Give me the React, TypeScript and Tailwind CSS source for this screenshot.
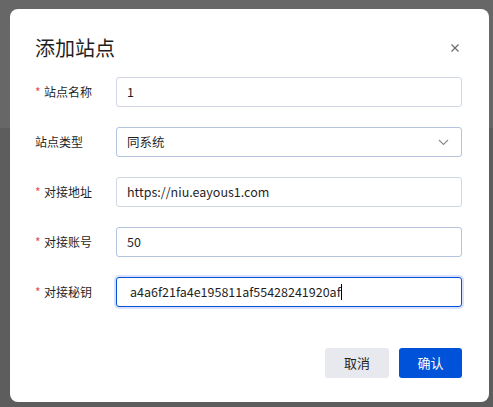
import React from "react";

const font = { fontFamily: '"Microsoft YaHei", "Noto Sans CJK SC", "Noto Sans", sans-serif' };

function Label({ text, required }: { text: string; required?: boolean }) {
  return (
    <div className="w-[81px] shrink-0 flex items-center text-[12px] text-[#1f1f1f]">
      {required && <span className="text-[#e34d59] mr-[3px] w-[6px]">*</span>}
      <span>{text}</span>
    </div>
  );
}

function Row({ label, required, children }: { label: string; required?: boolean; children: React.ReactNode }) {
  return (
    <div className="flex items-center h-[30px]">
      <Label text={label} required={required} />
      {children}
    </div>
  );
}

function Input({ value, border = "border-[#d0d7e3]" }: { value: string; border?: string }) {
  return (
    <div className={`flex-1 h-[30px] rounded-[3px] border ${border} bg-white flex items-center pl-[10px] text-[12.5px] text-[#1f1f1f]`}>
      {value}
    </div>
  );
}

export default function App() {
  return (
    <div className="relative w-[493px] h-[407px] overflow-hidden" style={font}>
      <div className="h-[128px] bg-[#676767]" />
      <div className="h-[279px] bg-[#5d5d5d]" />
      <div className="absolute left-[10px] top-[9px] w-[479px] h-[393px] bg-white rounded-[8px] pl-[25px] pr-[27px] pt-[26px]">
        <div className="flex items-center justify-between h-[26px]">
          <div className="text-[20px] text-[#1f1f1f] leading-[26px]">添加站点</div>
          <svg width="10" height="10" viewBox="0 0 10 10" className="mr-[2px]">
            <path d="M1.5 1.5 L8.5 8.5 M8.5 1.5 L1.5 8.5" stroke="#6b6b6b" strokeWidth="1.2" />
          </svg>
        </div>
        <div className="mt-[16px] flex flex-col gap-[20px]">
          <Row label="站点名称" required>
            <Input value="1" />
          </Row>
          <Row label="站点类型">
            <div className="flex-1 h-[30px] rounded-[3px] border border-[#b3c3e0] bg-white flex items-center justify-between pl-[10px] pr-[12px] text-[12.5px] text-[#1f1f1f]">
              <span>同系统</span>
              <svg width="11" height="7" viewBox="0 0 11 7">
                <path d="M1 1 L5.5 5.5 L10 1" stroke="#8a8a8a" strokeWidth="1.1" fill="none" />
              </svg>
            </div>
          </Row>
          <Row label="对接地址" required>
            <Input value="https://niu.eayous1.com" />
          </Row>
          <Row label="对接账号" required>
            <Input value="50" border="border-[#b3c3e0]" />
          </Row>
          <Row label="对接秘钥" required>
            <div className="flex-1 h-[30px] rounded-[3px] border border-[#0052d9] bg-white flex items-center pl-[13px] text-[12.5px] text-[#1f1f1f] shadow-[0_0_0_2px_#d9e1ff]">
              <span>a4a6f21fa4e195811af55428241920af</span>
              <span className="w-px h-[16px] bg-black" />
            </div>
          </Row>
        </div>
        <div className="mt-[41px] flex justify-end gap-[10px]">
          <button className="w-[64px] h-[30px] rounded-[3px] bg-[#e7e9ee] text-[13px] text-[#1f1f1f]">取消</button>
          <button className="w-[63px] h-[30px] rounded-[3px] bg-[#0052d9] text-[13px] text-white">确认</button>
        </div>
      </div>
    </div>
  );
}
